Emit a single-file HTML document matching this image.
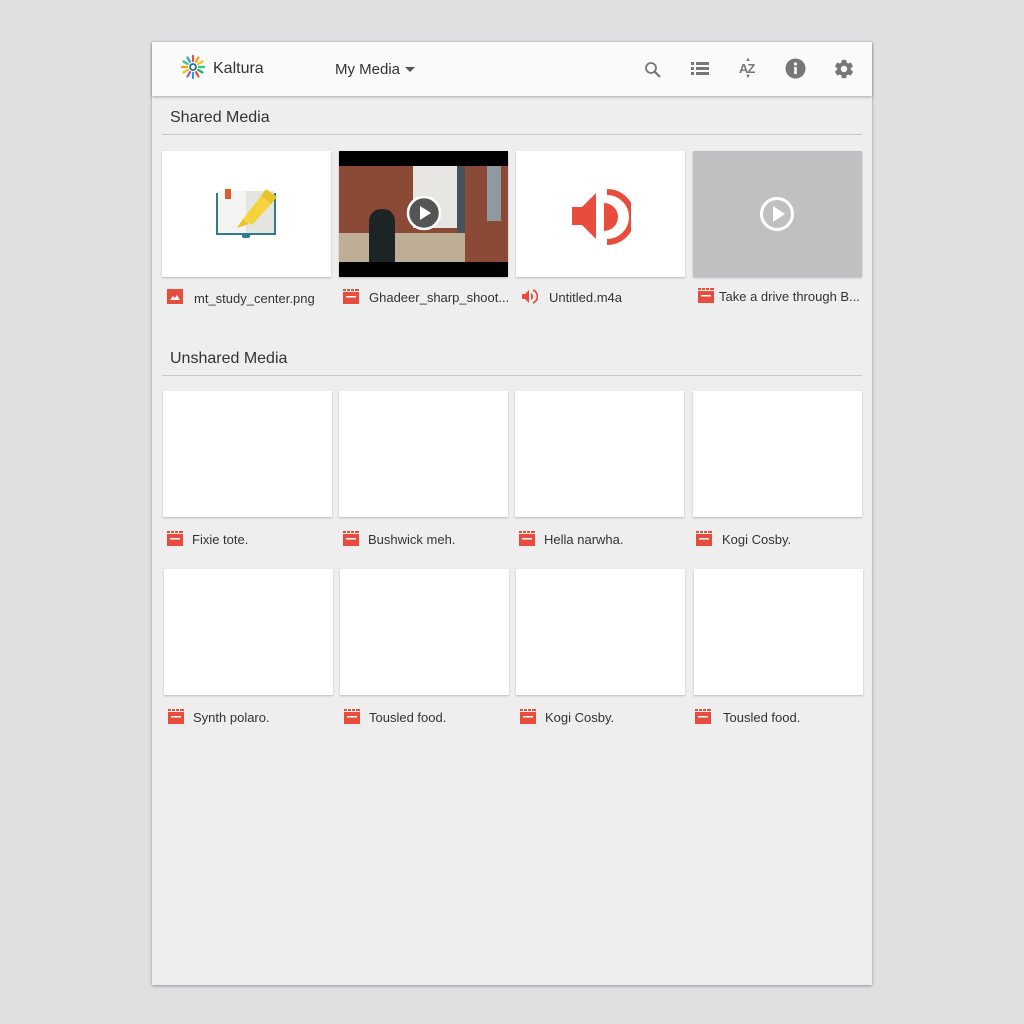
<!DOCTYPE html>
<html><head><meta charset="utf-8"><style>
*{margin:0;padding:0;box-sizing:border-box}
body{width:1024px;height:1024px;background:#dfe0e2;font-family:"Liberation Sans",sans-serif;position:relative;overflow:hidden}
#panel{position:absolute;left:152px;top:42px;width:720px;height:943px;background:#eeeeee;box-shadow:0 1px 3px rgba(0,0,0,.35)}
#hdr{position:absolute;left:152px;top:42px;width:720px;height:54px;background:#fafafa;box-shadow:0 1px 3px rgba(0,0,0,.3)}
.abs{position:absolute}
.h2{position:absolute;left:170px;font-size:16px;color:#333}
.rule{position:absolute;left:162px;width:700px;height:1px;background:#c8c8c8}
.card{position:absolute;width:169px;height:126px;background:#fff;box-shadow:0 1px 2px rgba(0,0,0,.22)}
.lbl{position:absolute;font-size:13px;color:#333;white-space:nowrap}
.ico{position:absolute;width:16px;height:15px}
</style></head><body>
<div id="panel"></div>
<div id="hdr"></div>
<!-- logo -->
<svg class="abs" style="left:181px;top:55px" width="24" height="24" viewBox="-12 -12 24 24">
<g stroke-width="2.2" stroke-linecap="round">
<line x1="0" y1="-6" x2="0" y2="-11" stroke="#e74c3c"/>
<line x1="3" y1="-5.2" x2="5.5" y2="-9.5" stroke="#f39c12"/>
<line x1="5.2" y1="-3" x2="9.5" y2="-5.5" stroke="#f1c40f"/>
<line x1="6" y1="0" x2="11" y2="0" stroke="#2ecc71"/>
<line x1="5.2" y1="3" x2="9.5" y2="5.5" stroke="#27ae60"/>
<line x1="3" y1="5.2" x2="5.5" y2="9.5" stroke="#e74c3c"/>
<line x1="0" y1="6" x2="0" y2="11" stroke="#3498db"/>
<line x1="-3" y1="5.2" x2="-5.5" y2="9.5" stroke="#9b59b6"/>
<line x1="-5.2" y1="3" x2="-9.5" y2="5.5" stroke="#f1c40f"/>
<line x1="-6" y1="0" x2="-11" y2="0" stroke="#f39c12"/>
<line x1="-5.2" y1="-3" x2="-9.5" y2="-5.5" stroke="#2ecc71"/>
<line x1="-3" y1="-5.2" x2="-5.5" y2="-9.5" stroke="#3498db"/>
</g><circle r="3" fill="none" stroke="#1f6fa6" stroke-width="1.8"/></svg>
<div class="abs" style="left:213px;top:60px;font-size:16px;color:#333">Kaltura</div>
<div class="abs" style="left:335px;top:61px;font-size:15px;color:#333">My Media</div>
<div class="abs" style="left:405px;top:67px;width:0;height:0;border-left:5px solid transparent;border-right:5px solid transparent;border-top:5px solid #555"></div>
<!-- header icons -->
<svg class="abs" style="left:643px;top:60px" width="20" height="20" viewBox="0 0 20 20"><circle cx="8" cy="8" r="5" fill="none" stroke="#777" stroke-width="1.8"/><line x1="11.5" y1="11.5" x2="17" y2="17" stroke="#777" stroke-width="2.2"/></svg>
<svg class="abs" style="left:690px;top:60px" width="20" height="18" viewBox="0 0 20 18"><g fill="#777"><rect x="1" y="2" width="3" height="3"/><rect x="6" y="2" width="13" height="3"/><rect x="1" y="7" width="3" height="3"/><rect x="6" y="7" width="13" height="3"/><rect x="1" y="12" width="3" height="3"/><rect x="6" y="12" width="13" height="3"/></g></svg>
<div class="abs" style="left:739px;top:61px;font-size:13px;font-weight:bold;color:#777;letter-spacing:-1px">AZ</div>
<div class="abs" style="left:745px;top:57px;font-size:6px;color:#777">▲</div>
<div class="abs" style="left:745px;top:74px;font-size:6px;color:#777">▼</div>
<svg class="abs" style="left:785px;top:58px" width="21" height="21" viewBox="0 0 21 21"><circle cx="10.5" cy="10.5" r="10" fill="#777"/><circle cx="10.5" cy="6" r="1.6" fill="#fff"/><rect x="9.2" y="9" width="2.6" height="7" fill="#fff"/></svg>
<svg class="abs" style="left:833px;top:58px" width="22" height="22" viewBox="0 0 24 24"><path fill="#777" d="M19.4 13c.04-.33.06-.66.06-1s-.02-.67-.06-1l2.1-1.65c.2-.15.24-.42.12-.64l-2-3.460c-.12-.22-.39-.3-.61-.22l-2.5 1c-.52-.4-1.080-.73-1.69-.98l-.38-2.65A.49.49 0 0 0 14 2h-4c-.25 0-.46.18-.49.42l-.38 2.65c-.61.25-1.17.59-1.69.98l-2.49-1c-.23-.09-.49 0-.61.22l-2 3.46c-.13.22-.07.49.12.64L4.57 11c-.04.33-.07.67-.07 1s.03.67.07 1l-2.11 1.65c-.19.15-.24.42-.12.64l2 3.46c.12.22.39.3.61.22l2.49-1c.52.4 1.08.73 1.69.98l.38 2.65c.03.24.24.42.49.42h4c.25 0 .46-.18.49-.42l.38-2.65c.61-.25 1.17-.59 1.69-.98l2.49 1c.23.09.49 0 .61-.22l2-3.46c.12-.22.07-.49-.12-.64L19.4 13zM12 15.5a3.5 3.5 0 1 1 0-7 3.5 3.5 0 0 1 0 7z"/></svg>

<div class="h2" style="top:109px">Shared Media</div>
<div class="rule" style="top:134px"></div>
<div class="h2" style="top:350px">Unshared Media</div>
<div class="rule" style="top:375px"></div>

<!-- row 1 -->
<div class="card" style="left:162px;top:151px"></div>
<svg class="abs" style="left:215px;top:187px" width="64" height="54" viewBox="0 0 64 54">
<path d="M1 6h60v42H1z" fill="#2f7d8c"/><path d="M3 4h28v42H3z" fill="#f4f4f2"/><path d="M31 4h28v42H31z" fill="#e4e4e0"/>
<rect x="10" y="2" width="6" height="10" fill="#e05a2b"/><rect x="27" y="47" width="8" height="4" rx="2" fill="#2f7d8c"/>
<path d="M22 41l6-9 6 5z" fill="#e8c22a"/><path d="M28 32l18-23 10 8-19 21z" fill="#f5d33a"/><path d="M46 9l5-7 11 8-6 7z" fill="#e8c22a"/></svg>
<div class="card" style="left:339px;top:151px;background:#000;overflow:hidden">
 <div class="abs" style="left:0;top:15px;width:169px;height:96px;background:#8a4a36"></div>
 <div class="abs" style="left:74px;top:15px;width:44px;height:62px;background:#e8e6e2"></div>
 <div class="abs" style="left:118px;top:15px;width:8px;height:70px;background:#45525a"></div>
 <div class="abs" style="left:148px;top:15px;width:14px;height:55px;background:#8e9aa0"></div>
 <div class="abs" style="left:0;top:82px;width:126px;height:29px;background:#bfae96"></div>
 <div class="abs" style="left:30px;top:58px;width:26px;height:53px;background:#1c2426;border-radius:12px 12px 0 0"></div>
 <svg class="abs" style="left:67px;top:44px" width="36" height="36" viewBox="0 0 36 36"><circle cx="18" cy="18" r="16" fill="#555" stroke="#fff" stroke-width="2.5"/><path d="M14 11v14l11-7z" fill="#fff"/></svg>
</div>
<div class="card" style="left:516px;top:151px"></div>
<svg class="abs" style="left:571px;top:189px" width="60" height="56" viewBox="0 0 60 56"><path d="M1 18h10L25 4v46L11 36H1z" fill="#e74c3c"/><path d="M33 14a14 14 0 0 1 0 28z" fill="#e74c3c"/><path d="M36 3a25 25 0 0 1 0 50" fill="none" stroke="#e74c3c" stroke-width="6"/></svg>
<div class="card" style="left:693px;top:151px;background:#bfc0c2"></div>
<svg class="abs" style="left:759px;top:196px" width="36" height="36" viewBox="0 0 36 36"><circle cx="18" cy="18" r="15.5" fill="none" stroke="#fff" stroke-width="3"/><path d="M14 10v16l12-8z" fill="#fff"/></svg>

<svg class="ico" style="left:167px;top:289px" viewBox="0 0 16 15"><rect width="16" height="15" fill="#e74c3c"/><path d="M3 11l3-4 2 2 2-3 3 5z" fill="#fff"/></svg>
<div class="lbl" style="left:194px;top:291px">mt_study_center.png</div>
<svg class="ico" style="left:343px;top:289px" viewBox="0 0 16 15"><rect y="3" width="16" height="12" fill="#e74c3c"/><path d="M0 0h16v2H0z" fill="#e74c3c"/><path d="M3 0h1v2H3zM7 0h1v2H7zM11 0h1v2h-1z" fill="#fff"/><rect x="3" y="7" width="10" height="1.5" fill="#fff"/></svg>
<div class="lbl" style="left:369px;top:290px">Ghadeer_sharp_shoot...</div>
<svg class="ico" style="left:522px;top:289px" viewBox="0 0 16 15"><path d="M0 5h3l4-4v13l-4-4H0z" fill="#e74c3c"/><path d="M9 4a4 4 0 0 1 0 7z" fill="#e74c3c"/><path d="M11 1a7 7 0 0 1 0 13" fill="none" stroke="#e74c3c" stroke-width="1.8"/></svg>
<div class="lbl" style="left:549px;top:290px">Untitled.m4a</div>
<svg class="ico" style="left:698px;top:288px" viewBox="0 0 16 15"><rect y="3" width="16" height="12" fill="#e74c3c"/><path d="M0 0h16v2H0z" fill="#e74c3c"/><path d="M3 0h1v2H3zM7 0h1v2H7zM11 0h1v2h-1z" fill="#fff"/><rect x="3" y="7" width="10" height="1.5" fill="#fff"/></svg>
<div class="lbl" style="left:719px;top:289px">Take a drive through B...</div>

<!-- row 2 -->
<div class="card" style="left:163px;top:391px"></div>
<div class="card" style="left:339px;top:391px"></div>
<div class="card" style="left:515px;top:391px"></div>
<div class="card" style="left:693px;top:391px"></div>
<!-- row 3 -->
<div class="card" style="left:164px;top:569px"></div>
<div class="card" style="left:340px;top:569px"></div>
<div class="card" style="left:516px;top:569px"></div>
<div class="card" style="left:694px;top:569px"></div>

<svg class="ico" style="left:167px;top:531px" viewBox="0 0 16 15"><rect y="3" width="16" height="12" fill="#e74c3c"/><path d="M0 0h16v2H0z" fill="#e74c3c"/><path d="M3 0h1v2H3zM7 0h1v2H7zM11 0h1v2h-1z" fill="#fff"/><rect x="3" y="7" width="10" height="1.5" fill="#fff"/></svg>
<div class="lbl" style="left:192px;top:532px">Fixie tote.</div>
<svg class="ico" style="left:343px;top:531px" viewBox="0 0 16 15"><rect y="3" width="16" height="12" fill="#e74c3c"/><path d="M0 0h16v2H0z" fill="#e74c3c"/><path d="M3 0h1v2H3zM7 0h1v2H7zM11 0h1v2h-1z" fill="#fff"/><rect x="3" y="7" width="10" height="1.5" fill="#fff"/></svg>
<div class="lbl" style="left:368px;top:532px">Bushwick meh.</div>
<svg class="ico" style="left:519px;top:531px" viewBox="0 0 16 15"><rect y="3" width="16" height="12" fill="#e74c3c"/><path d="M0 0h16v2H0z" fill="#e74c3c"/><path d="M3 0h1v2H3zM7 0h1v2H7zM11 0h1v2h-1z" fill="#fff"/><rect x="3" y="7" width="10" height="1.5" fill="#fff"/></svg>
<div class="lbl" style="left:544px;top:532px">Hella narwha.</div>
<svg class="ico" style="left:696px;top:531px" viewBox="0 0 16 15"><rect y="3" width="16" height="12" fill="#e74c3c"/><path d="M0 0h16v2H0z" fill="#e74c3c"/><path d="M3 0h1v2H3zM7 0h1v2H7zM11 0h1v2h-1z" fill="#fff"/><rect x="3" y="7" width="10" height="1.5" fill="#fff"/></svg>
<div class="lbl" style="left:722px;top:532px">Kogi Cosby.</div>

<svg class="ico" style="left:168px;top:709px" viewBox="0 0 16 15"><rect y="3" width="16" height="12" fill="#e74c3c"/><path d="M0 0h16v2H0z" fill="#e74c3c"/><path d="M3 0h1v2H3zM7 0h1v2H7zM11 0h1v2h-1z" fill="#fff"/><rect x="3" y="7" width="10" height="1.5" fill="#fff"/></svg>
<div class="lbl" style="left:193px;top:710px">Synth polaro.</div>
<svg class="ico" style="left:344px;top:709px" viewBox="0 0 16 15"><rect y="3" width="16" height="12" fill="#e74c3c"/><path d="M0 0h16v2H0z" fill="#e74c3c"/><path d="M3 0h1v2H3zM7 0h1v2H7zM11 0h1v2h-1z" fill="#fff"/><rect x="3" y="7" width="10" height="1.5" fill="#fff"/></svg>
<div class="lbl" style="left:369px;top:710px">Tousled food.</div>
<svg class="ico" style="left:520px;top:709px" viewBox="0 0 16 15"><rect y="3" width="16" height="12" fill="#e74c3c"/><path d="M0 0h16v2H0z" fill="#e74c3c"/><path d="M3 0h1v2H3zM7 0h1v2H7zM11 0h1v2h-1z" fill="#fff"/><rect x="3" y="7" width="10" height="1.5" fill="#fff"/></svg>
<div class="lbl" style="left:545px;top:710px">Kogi Cosby.</div>
<svg class="ico" style="left:695px;top:709px" viewBox="0 0 16 15"><rect y="3" width="16" height="12" fill="#e74c3c"/><path d="M0 0h16v2H0z" fill="#e74c3c"/><path d="M3 0h1v2H3zM7 0h1v2H7zM11 0h1v2h-1z" fill="#fff"/><rect x="3" y="7" width="10" height="1.5" fill="#fff"/></svg>
<div class="lbl" style="left:723px;top:710px">Tousled food.</div>
</body></html>
